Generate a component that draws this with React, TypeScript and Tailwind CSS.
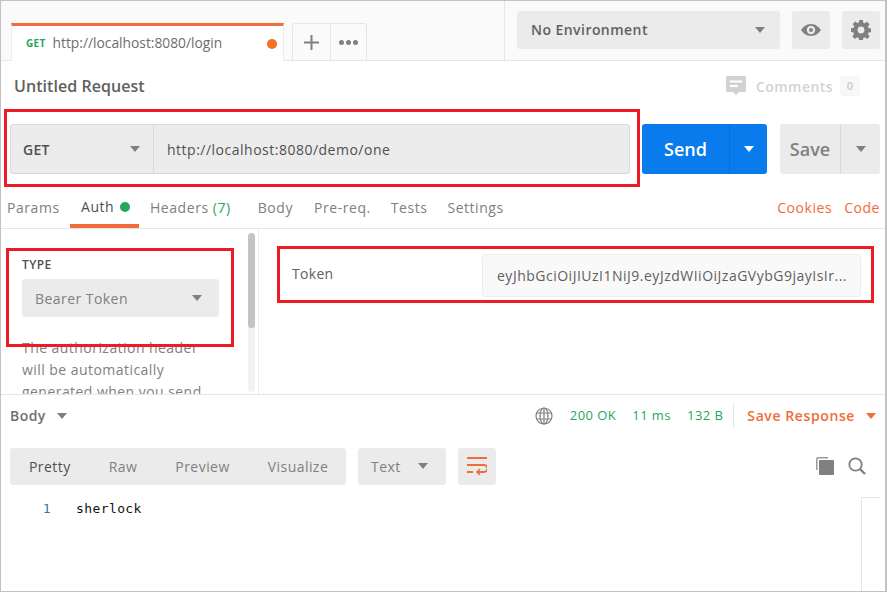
import React from 'react';

const Caret: React.FC<{ className?: string }> = ({ className = 'border-t-[#808080]' }) => (
  <span className={`w-0 h-0 border-x-[5px] border-x-transparent border-t-[6px] ${className}`} />
);

const RedBox: React.FC<{ className: string }> = ({ className }) => (
  <div className={`absolute border-[3px] border-[#ed1c24] pointer-events-none ${className}`} />
);

const GearIcon = () => (
  <svg width="20" height="20" viewBox="0 0 20 20" fill="#808080">
    <path
      fillRule="evenodd"
      d="M8.2 0h3.6l.5 2.7 1.5.6 2.3-1.6 2.5 2.5-1.6 2.3.6 1.5 2.7.5v3.6l-2.7.5-.6 1.5 1.6 2.3-2.5 2.5-2.3-1.6-1.5.6-.5 2.7H8.2l-.5-2.7-1.5-.6-2.3 1.6-2.5-2.5 1.6-2.3-.6-1.5L0 11.8V8.2l2.7-.5.6-1.5-1.6-2.3 2.5-2.5 2.3 1.6 1.5-.6zM10 6.6a3.4 3.4 0 1 0 0 6.8 3.4 3.4 0 0 0 0-6.8z"
    />
  </svg>
);

const EyeIcon = () => (
  <svg width="20" height="12" viewBox="0 0 20 12" fill="#808080">
    <path
      fillRule="evenodd"
      d="M10 0c4.4 0 8 3 10 6-2 3-5.600 6-10 6S2 9 0 6c2-3 5.600-6 10-6zm0 1.800a4.200 4.200 0 1 0 0 8.400 4.200 4.200 0 0 0 0-8.400zM10 4a2 2 0 1 1 0 4 2 2 0 0 1 0-4z"
    />
  </svg>
);

const CommentIcon = () => (
  <svg width="20" height="20" viewBox="0 0 20 20">
    <path d="M0 0h20v16h-7l-3 3-3-3H0z" fill="#d2d2d2" />
    <path d="M4 4.500h12v2H4zM4 9h8v2H4z" fill="#fff" />
  </svg>
);

const GlobeIcon = () => (
  <svg width="18" height="18" viewBox="0 0 18 18" fill="none" stroke="#808080" strokeWidth="1.200">
    <circle cx="9" cy="9" r="8" />
    <ellipse cx="9" cy="9" rx="4" ry="8" />
    <path d="M1.500 6h15M1.500 12h15M9 1v16" />
  </svg>
);

const WrapIcon = () => (
  <svg width="20" height="18" viewBox="0 0 20 18" fill="none" stroke="#f26b3a" strokeWidth="2">
    <path d="M0 1h20M0 8h17a2.500 2.500 0 0 1 0 7h-6M0 15h6" />
    <path d="M13 12l-3 3 3 3" strokeWidth="1.500" />
  </svg>
);

const CopyIcon = () => (
  <svg width="18" height="18" viewBox="0 0 18 18">
    <path d="M0 2a2 2 0 0 1 2-2h10v1.500H2.500a1 1 0 0 0-1 1V13H0z" fill="#9a9a9a" />
    <rect x="3" y="3" width="15" height="15" rx="1" fill="#808080" />
  </svg>
);

const SearchIcon = () => (
  <svg width="18" height="18" viewBox="0 0 18 18" fill="none" stroke="#808080">
    <circle cx="7.500" cy="7.500" r="6.200" strokeWidth="1.800" />
    <path d="M12 12l5 5" strokeWidth="2.400" />
  </svg>
);

export default function App() {
  return (
    <div className="relative w-[887px] h-[592px] overflow-hidden flex flex-col bg-white border-l border-t border-r-2 border-b border-[#c2c2c2] font-['Open_Sans',sans-serif] text-[14px] tracking-[0.45px] text-[#808080]">
      {/* tab strip */}
      <div className="h-[60px] shrink-0 flex items-end justify-between bg-[#fafafa] border-b border-[#e6e6e6]">
        <div className="flex items-end pl-[10px]">
          <div className="w-[273px] h-[38px] -mb-px flex items-center bg-white border-t-[3px] border-t-[#f26b3a] border-x border-x-[#ececec] pl-[14px] pr-[6px] tracking-normal">
            <span className="text-[10px] font-bold text-[#26a65b] mr-[7px] tracking-[0.3px]">GET</span>
            <span className="text-[13.800px] text-[#6e6e6e] flex-1">http://localhost:8080/login</span>
            <span className="w-[10px] h-[10px] rounded-full bg-[#f47023]" />
          </div>
          <div className="ml-[8px] h-[37px] flex rounded-t-[3px] border border-b-0 border-[#e6e6e6]">
            <div className="w-[38px] flex items-center justify-center border-r border-[#e6e6e6]">
              <svg width="15" height="15" viewBox="0 0 15 15" fill="#808080">
                <path d="M6.500 0h2v6.500H15v2H8.500V15h-2V8.500H0v-2h6.500z" />
              </svg>
            </div>
            <div className="w-[35px] flex items-center justify-center gap-[2px]">
              <span className="w-[5px] h-[5px] rounded-full bg-[#808080]" />
              <span className="w-[5px] h-[5px] rounded-full bg-[#808080]" />
              <span className="w-[5px] h-[5px] rounded-full bg-[#808080]" />
            </div>
          </div>
        </div>
        <div className="h-full flex items-center gap-[12px] pr-[5px] pl-[12px] pb-[2px] border-l border-[#e6e6e6]">
          <div className="w-[263px] h-[38px] flex items-center justify-between bg-[#ebebeb] rounded-[3px] pl-[14px] pr-[15px]">
            <span className="text-[14px] font-semibold text-[#606060]">No Environment</span>
            <Caret />
          </div>
          <div className="w-[38px] h-[38px] flex items-center justify-center bg-[#ebebeb] rounded-[3px]">
            <EyeIcon />
          </div>
          <div className="w-[38px] h-[38px] flex items-center justify-center bg-[#ebebeb] rounded-[3px]">
            <GearIcon />
          </div>
        </div>
      </div>

      {/* request title */}
      <div className="h-[50px] shrink-0 flex items-center justify-between pl-[13px] pr-[25px]">
        <span className="text-[16px] font-semibold tracking-[0.05px] text-[#606060]">Untitled Request</span>
        <div className="flex items-center">
          <CommentIcon />
          <span className="ml-[10px] text-[14px] font-semibold text-[#d2d2d2]">Comments</span>
          <span className="ml-[7px] w-[20px] h-[20px] flex items-center justify-center bg-[#f7f7f7] rounded-[2px] text-[11px] font-semibold text-[#c8c8c8]">0</span>
        </div>
      </div>

      {/* url bar */}
      <div className="h-[50px] mt-[13px] shrink-0 flex items-stretch pl-[9px] pr-[5px]">
        <div className="w-[620px] flex bg-[#ececec] border border-[#d9d9d9] rounded-[3px]">
          <div className="w-[143px] flex items-center justify-between pl-[12px] pr-[13px] border-r border-[#d9d9d9]">
            <span className="text-[14px] font-semibold tracking-[0.3px] text-[#505050]">GET</span>
            <Caret />
          </div>
          <span className="flex items-center pl-[13px] text-[14px] tracking-[0.5px] text-[#505050]">http://localhost:8080/demo/one</span>
        </div>
        <div className="ml-[12px] w-[125px] flex bg-[#097bed] rounded-[3px]">
          <span className="w-[88px] flex items-center justify-center text-[18px] font-semibold tracking-normal text-white border-r border-[#0a6fd4]">Send</span>
          <span className="flex-1 flex items-center justify-center">
            <Caret className="border-t-white" />
          </span>
        </div>
        <div className="ml-[13px] w-[100px] flex bg-[#ebebeb] rounded-[3px]">
          <span className="w-[61px] flex items-center justify-center text-[18px] font-semibold tracking-normal text-[#808080] border-r border-[#d9d9d9]">Save</span>
          <span className="flex-1 flex items-center justify-center">
            <Caret />
          </span>
        </div>
      </div>

      {/* request tabs */}
      <div className="h-[40px] mt-[15px] shrink-0 flex items-center justify-between border-b border-[#e6e6e6] pr-[5px] text-[14px] tracking-[0.55px]">
        <div className="flex h-full items-center">
          <span className="ml-[6px] w-[53px] pb-[3px] text-[#808080]">Params</span>
          <div className="ml-[10px] w-[69px] h-full flex items-center gap-[6px] border-b-[4px] border-[#f26b3a] pl-[11px]">
            <span className="text-[#505050]">Auth</span>
            <span className="w-[10px] h-[10px] rounded-full bg-[#26a65b]" />
          </div>
          <span className="ml-[11px] pb-[3px] text-[#808080]">
            Headers <span className="text-[#26a65b]">(7)</span>
          </span>
          <span className="ml-[27px] pb-[3px]">Body</span>
          <span className="ml-[21px] pb-[3px]">Pre-req.</span>
          <span className="ml-[20px] pb-[3px]">Tests</span>
          <span className="ml-[20px] pb-[3px]">Settings</span>
        </div>
        <div className="flex gap-[12px] pb-[3px] text-[#f26b3a]">
          <span>Cookies</span>
          <span>Code</span>
        </div>
      </div>

      {/* auth panel */}
      <div className="h-[166px] shrink-0 flex border-b border-[#e6e6e6]">
        <div className="w-[258px] shrink-0 relative overflow-hidden border-r border-[#ececec] pl-[21px] pr-[40px] pt-[27px]">
          <div className="text-[12px] font-semibold leading-[17px] text-[#505050]">TYPE</div>
          <div className="mt-[6px] w-[197px] h-[38px] flex items-center justify-between bg-[#ebebeb] rounded-[3px] pl-[13px] pr-[17px]">
            <span className="text-[14px] text-[#808080]">Bearer Token</span>
            <Caret />
          </div>
          <p className="mt-[20px] w-[190px] text-[14px] leading-[22px] text-[#808080]">
            The authorization header will be automatically generated when you send
          </p>
          <div className="absolute right-[3px] top-[4px] w-[7px] h-[159px] bg-[#f2f2f2] rounded-[4px]">
            <div className="w-[7px] h-[95px] bg-[#c4c4c4] rounded-[4px]" />
          </div>
        </div>
        <div className="flex-1 flex items-start pt-[25px] pl-[33px]">
          <span className="mt-[9px] w-[190px] text-[14px] tracking-[0.3px] text-[#606060]">Token</span>
          <div className="w-[379px] h-[43px] flex items-center bg-[#f9f9f9] border border-[#ececec] rounded-[3px] pl-[14px] text-[14px] tracking-[0.5px] text-[#606060] whitespace-nowrap overflow-hidden">
            eyJhbGciOiJIUzI1NiJ9.eyJzdWIiOiJzaGVybG9jayIsIr...
          </div>
        </div>
      </div>

      {/* response header */}
      <div className="h-[41px] shrink-0 flex items-center justify-between pl-[9px] pr-[9px]">
        <div className="flex items-center gap-[11px]">
          <span className="text-[14px] font-semibold text-[#707070]">Body</span>
          <Caret />
        </div>
        <div className="flex items-center text-[13px] text-[#26a65b]">
          <GlobeIcon />
          <span className="ml-[17px]">200 OK</span>
          <span className="ml-[16px]">11 ms</span>
          <span className="ml-[16px]">132 B</span>
          <span className="ml-[10px] h-[25px] border-l border-[#e6e6e6]" />
          <span className="ml-[13px] text-[14px] font-semibold tracking-[0.6px] text-[#f26b3a]">Save Response</span>
          <span className="ml-[11px] flex">
            <Caret className="border-t-[#f26b3a]" />
          </span>
        </div>
      </div>

      {/* response toolbar */}
      <div className="h-[38px] mt-[11px] shrink-0 flex items-center pl-[9px] pr-[19px]">
        <div className="w-[336px] h-[37px] flex items-center bg-[#ebebeb] rounded-[3px] text-[14px] text-[#808080]">
          <span className="ml-[19px] text-[#505050]">Pretty</span>
          <span className="ml-[38px]">Raw</span>
          <span className="ml-[38px]">Preview</span>
          <span className="ml-[38px]">Visualize</span>
        </div>
        <div className="ml-[12px] w-[88px] h-[37px] flex items-center justify-between bg-[#ebebeb] rounded-[3px] pl-[13px] pr-[18px] text-[14px] text-[#808080]">
          <span>Text</span>
          <Caret />
        </div>
        <div className="ml-[12px] w-[38px] h-[37px] flex items-center justify-center bg-[#ebebeb] rounded-[3px]">
          <WrapIcon />
        </div>
        <div className="ml-auto flex items-center gap-[14px]">
          <CopyIcon />
          <SearchIcon />
        </div>
      </div>

      {/* response body */}
      <div className="flex-1 flex">
        <div className="flex-1 flex items-start pt-[15px] font-['DejaVu_Sans_Mono',monospace] text-[13px] tracking-[0.4px] leading-[17px]">
          <span className="w-[50px] text-right text-[#2a7ab0]">1</span>
          <span className="ml-[25px] text-[#111]">sherlock</span>
        </div>
        <div className="w-[19px] mr-[5px] mt-[12px] border-l border-t border-[#e6e6e6]" />
      </div>

      {/* annotations */}
      <RedBox className="left-[3px] top-[108px] w-[636px] h-[78px]" />
      <RedBox className="left-[5px] top-[247px] w-[228px] h-[99px]" />
      <RedBox className="left-[276px] top-[245px] w-[597px] h-[57px]" />
    </div>
  );
}
